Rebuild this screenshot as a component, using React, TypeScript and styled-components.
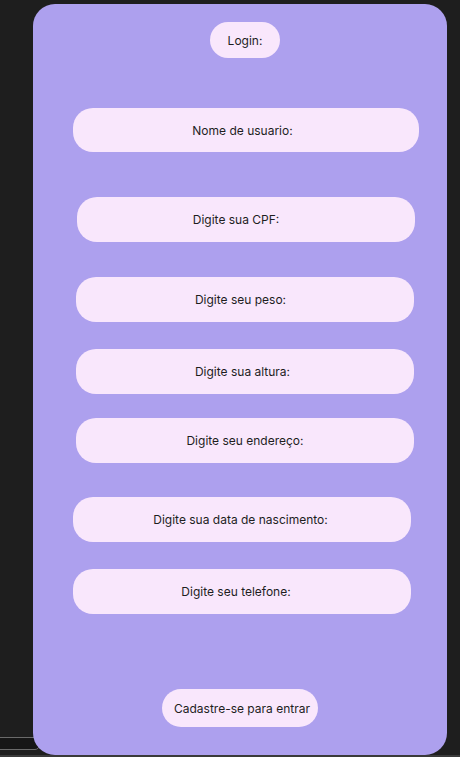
import styled, { createGlobalStyle } from "styled-components";

const GlobalStyle = createGlobalStyle`
    html, body {
        margin: 0;
        padding: 0;
        background: #1e1e1e;
    }
    body {
        font-family: Inter, "Noto Sans", "Liberation Sans", sans-serif;
    }
`;

const Page = styled.div`
    position: relative;
    width: 460px;
    height: 757px;
    padding-top: 4px;
    box-sizing: border-box;
    display: flex;
    flex-direction: column;
    overflow: hidden;
`;

// sobra de um frame do figma, atras do card
const Ghost = styled.div`
    position: absolute;
    left: -12px;
    top: 737px;
    width: 50px;
    height: 11px;
    border: 1px solid #6a6a6a;
    border-radius: 5px;
    background: #161616;
`;

const Card = styled.main`
    position: relative;
    margin-left: 33px;
    width: 414px;
    height: 751px;
    box-sizing: border-box;
    padding-top: 18px;
    background: #ada0ee;
    border-radius: 22px;
    display: flex;
    flex-direction: column;
    align-items: flex-start;
`;

const Strip = styled.div`
    height: 2px;
    background: #3a3a3a;
`;

// $shift: quanto o texto sai do centro (negativo = esquerda)
const Pill = styled.div<{ $w: number; $h: number; $left?: number; $top?: number; $shift?: number }>`
    width: ${(p) => p.$w}px;
    height: ${(p) => p.$h}px;
    margin-left: ${(p) => (p.$left === undefined ? "auto" : `${p.$left}px`)};
    margin-right: ${(p) => (p.$left === undefined ? "auto" : "0")};
    margin-top: ${(p) => p.$top ?? 0}px;
    padding-left: ${(p) => Math.max(0, (p.$shift ?? 0) * 2)}px;
    padding-right: ${(p) => Math.max(0, -(p.$shift ?? 0) * 2)}px;
    box-sizing: border-box;
    background: #f9e7fc;
    border-radius: 20px;
    display: flex;
    align-items: center;
    justify-content: center;
    font-size: 12px;
    color: #1e1e1e;
    white-space: nowrap;
`;

const fields = [
    { label: "Nome de usuario:", left: 40, top: 50, w: 346, h: 44, shift: -3.5 },
    { label: "Digite sua CPF:", left: 44, top: 45, w: 338, h: 45, shift: -10 },
    { label: "Digite seu peso:", left: 43, top: 35, w: 338, h: 45, shift: -4.5 },
    { label: "Digite sua altura:", left: 43, top: 27, w: 338, h: 45, shift: -2.5 },
    { label: "Digite seu endereço:", left: 43, top: 24, w: 338, h: 45, shift: 0 },
    { label: "Digite sua data de nascimento:", left: 40, top: 34, w: 338, h: 45, shift: -1.5 },
    { label: "Digite seu telefone:", left: 40, top: 27, w: 338, h: 45, shift: -6 },
];

function App() {
    return (
        <>
            <GlobalStyle />
            <Page>
                <Ghost />
                <Card>
                    <Pill $w={70} $h={36} $left={177}>Login:</Pill>
                    {fields.map((f) => (
                        <Pill key={f.label} $w={f.w} $h={f.h} $left={f.left} $top={f.top} $shift={f.shift}>
                            {f.label}
                        </Pill>
                    ))}
                    <Pill $w={156} $h={38} $top={75} $shift={2}>Cadastre-se para entrar</Pill>
                </Card>
                <Strip />
            </Page>
        </>
    );
}

export default App;
